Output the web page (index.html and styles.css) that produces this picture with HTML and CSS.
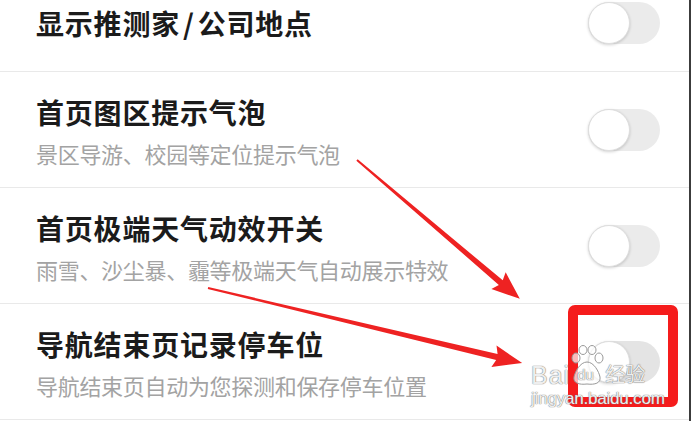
FILE: index.html
```html
<!DOCTYPE html>
<html lang="zh-CN">
<head>
  <meta charset="UTF-8">
  <meta name="viewport" content="width=device-width, initial-scale=1.0">
  <title>设置</title>
  <link rel="stylesheet" href="styles.css">
</head>
<body>
  <div class="screen">
    <div class="settings">
      <div class="row row-first">
        <div class="text">
          <div class="title">显示推测家<span class="sep">/</span>公司地点</div>
        </div>
        <div class="toggle"><span class="knob"></span></div>
      </div>
      <div class="row">
        <div class="text">
          <div class="title">首页图区提示气泡</div>
          <div class="desc">景区导游、校园等定位提示气泡</div>
        </div>
        <div class="toggle"><span class="knob"></span></div>
      </div>
      <div class="row">
        <div class="text">
          <div class="title">首页极端天气动效开关</div>
          <div class="desc">雨雪、沙尘暴、霾等极端天气自动展示特效</div>
        </div>
        <div class="toggle"><span class="knob"></span></div>
      </div>
      <div class="row">
        <div class="text">
          <div class="title">导航结束页记录停车位</div>
          <div class="desc">导航结束页自动为您探测和保存停车位置</div>
        </div>
        <div class="toggle faded"><span class="knob"></span></div>
      </div>
    </div>

    <!-- annotations drawn over the screenshot -->
    <svg class="arrows" width="691" height="421" viewBox="0 0 691 421">
      <g transform="translate(357 160) rotate(40.46)">
        <polygon points="0,-1 189,-3 186,-11 214,0 186,11 189,3 0,1" />
      </g>
      <g transform="translate(208 288) rotate(13.43)">
        <polygon points="0,-1 297,-3 294,-11 323,0 294,11 297,3 0,1" />
      </g>
    </svg>
    <div class="red-box"></div>

    <div class="watermark">
      <div class="wm-logo">
        <span class="wm-word">Bai</span>
        <span class="wm-paw">
          <svg width="34" height="42" viewBox="0 0 34 42">
            <ellipse cx="6" cy="14" rx="4" ry="5" />
            <ellipse cx="13" cy="6" rx="4" ry="4.5" />
            <ellipse cx="22" cy="6" rx="4" ry="4.5" />
            <ellipse cx="29" cy="14" rx="4" ry="5" />
            <path d="M17 18 C10 18 5 28 4 33 C3 39 9 41 17 40 C25 41 31 39 30 33 C29 28 24 18 17 18 Z" />
          </svg>
          <span class="wm-du">du</span>
        </span>
        <span class="wm-cn">经验</span>
      </div>
      <div class="wm-url">jingyan.baidu.com</div>
    </div>
  </div>
</body>
</html>
```

FILE: styles.css
```css
html, body {
  margin: 0;
  padding: 0;
  background: #fff;
}

.screen {
  position: relative;
  width: 689px;
  height: 421px;
  overflow: hidden;
  border-right: 2px solid #3c3c3c;
  font-family: "Noto Sans CJK SC", "Noto Sans", sans-serif;
}

.settings {
  display: flex;
  flex-direction: column;
}

.row {
  display: grid;
  grid-template-columns: 1fr 72px;
  align-items: center;
  box-sizing: border-box;
  height: 116px;
  padding: 0 29px 0 36px;
  border-bottom: 1px solid #e9e9e9;
}

.row .text {
  align-self: start;
  padding-top: 22px;
}

.row-first {
  height: 72px;
  padding-bottom: 26px;
}

.row-first .text {
  align-self: center;
  padding-top: 0;
}

.title {
  font-size: 28px;
  line-height: 36px;
  font-weight: 700;
  letter-spacing: 0.8px;
  color: #1b1b1b;
}

.title .sep {
  padding: 0 3px;
}

.desc {
  margin-top: 8px;
  font-size: 22px;
  line-height: 30px;
  letter-spacing: -0.3px;
  color: #a3a3a3;
}

.toggle {
  position: relative;
  width: 72px;
  height: 42px;
  border-radius: 21px;
  background: #ebebeb;
}

.knob {
  position: absolute;
  left: 0;
  top: 0;
  width: 40px;
  height: 40px;
  border-radius: 50%;
  background: #fff;
  border: 1px solid #dedede;
  box-shadow: 0 1px 3px rgba(0, 0, 0, 0.18);
}

.toggle.faded {
  background: #e4e4e4;
}

.arrows {
  position: absolute;
  left: 0;
  top: 0;
  fill: #ee2222;
}

.red-box {
  position: absolute;
  left: 568px;
  top: 305px;
  width: 90px;
  height: 82px;
  border: 10px solid #f51c1c;
  border-radius: 7px;
}

.watermark {
  position: absolute;
  left: 531px;
  top: 344px;
  color: rgba(255, 255, 255, 0.9);
  font-family: "Liberation Sans", sans-serif;
  text-shadow: 0 0 1px #777, 0 0 1px #777;
}

.wm-logo {
  display: flex;
  align-items: flex-end;
  height: 42px;
}

.wm-word {
  font-size: 25px;
  line-height: 25px;
  letter-spacing: 1px;
  margin-bottom: -2px;
}

.wm-cn {
  font-family: "Noto Sans CJK SC", sans-serif;
  font-size: 20px;
  line-height: 22px;
  margin-left: 1px;
  margin-bottom: 1px;
}

.wm-paw {
  position: relative;
  width: 34px;
  height: 42px;
}

.wm-paw svg {
  display: block;
  fill: rgba(255, 255, 255, 0.7);
  stroke: #999;
  stroke-width: 1;
}

.wm-du {
  position: absolute;
  left: 7px;
  top: 22px;
  font-size: 15px;
  color: rgba(255, 255, 255, 0.9);
}

.wm-url {
  margin-top: 4px;
  font-size: 17px;
  line-height: 18px;
  letter-spacing: -0.2px;
}
```
